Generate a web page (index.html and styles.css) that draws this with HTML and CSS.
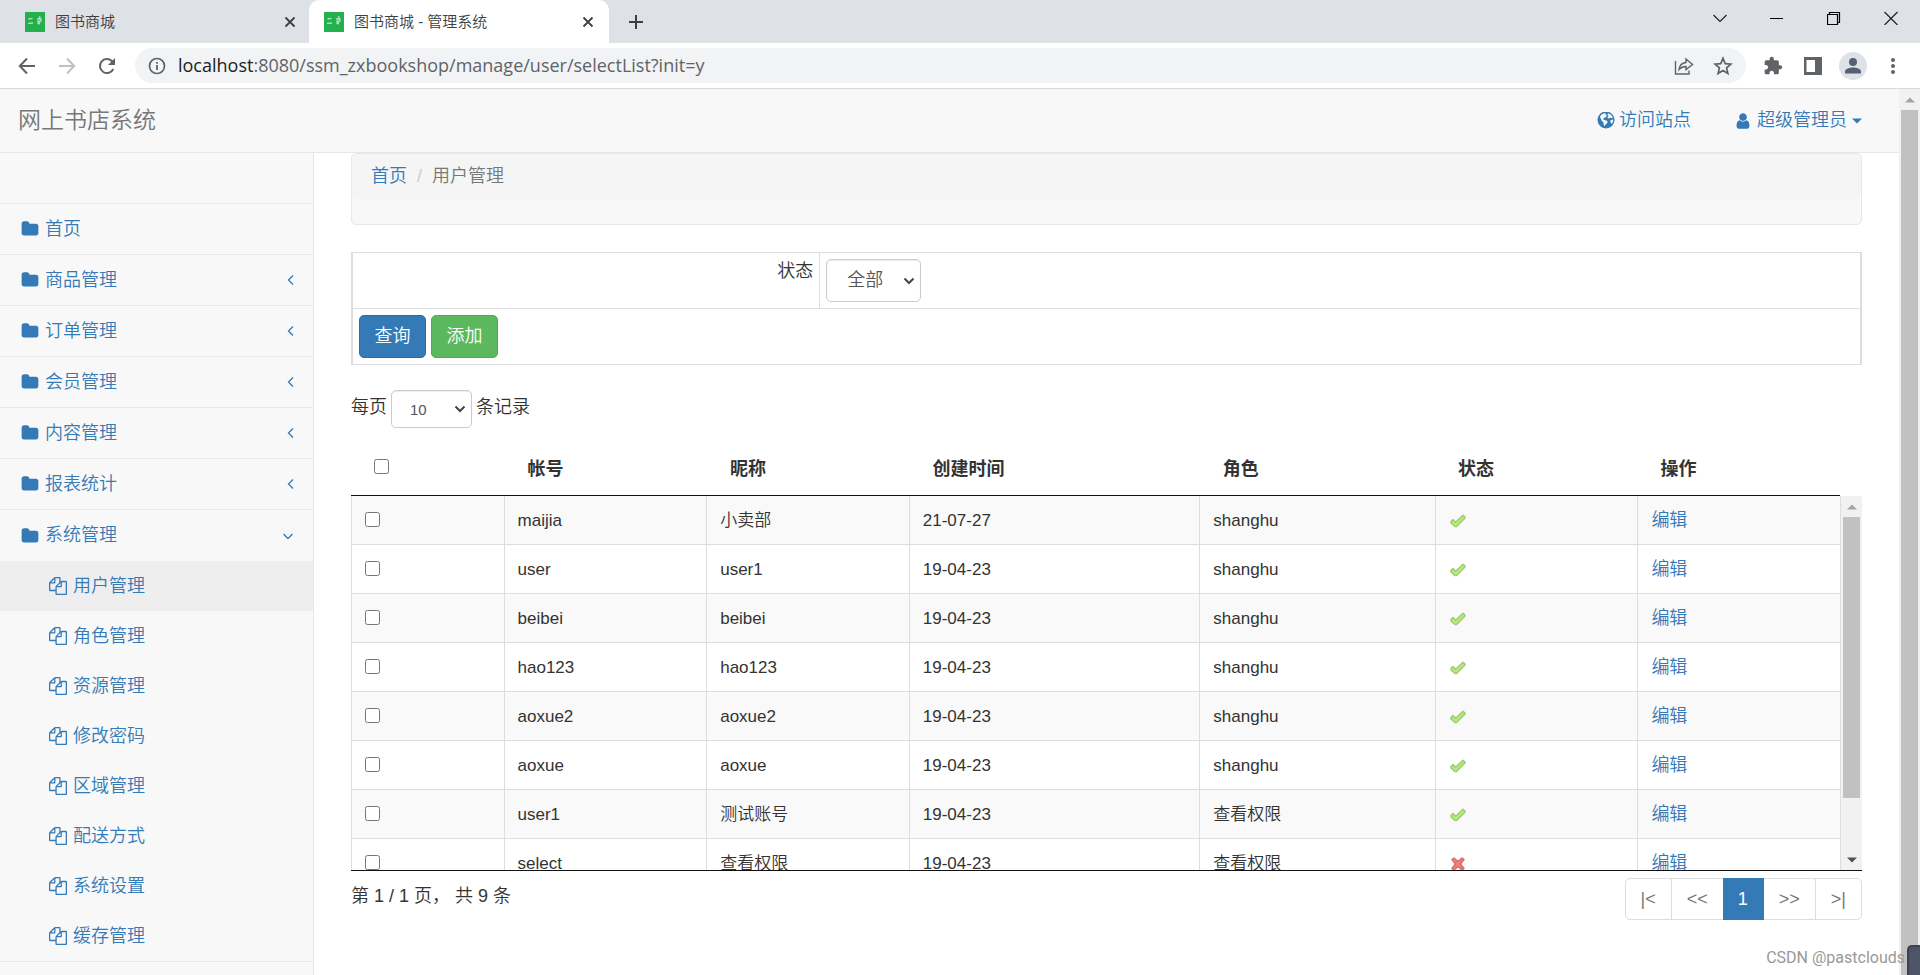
FILE: index.html
```html
<!DOCTYPE html>
<html lang="zh-CN">
<head>
<meta charset="utf-8">
<title>图书商城 - 管理系统</title>
<link rel="stylesheet" href="styles.css">
</head>
<body>
<svg class="sprite" aria-hidden="true">
  <symbol id="folder" viewBox="0 0 1792 1792"><path d="M1728 608v704q0 92-66 158t-158 66h-1216q-92 0-158-66t-66-158v-960q0-92 66-158t158-66h320q92 0 158 66t66 158v32h672q92 0 158 66t66 158z"/></symbol>
  <symbol id="files" viewBox="0 0 1792 1792"><path d="M1696 384q40 0 68 28t28 68v1216q0 40-28 68t-68 28h-960q-40 0-68-28t-28-68v-288h-544q-40 0-68-28t-28-68v-672q0-40 20-88t48-76l408-408q28-28 76-48t88-20h416q40 0 68 28t28 68v328q68-40 128-40h416zm-544 213l-299 299h299v-299zm-640-384l-299 299h299v-299zm196 647l316-316v-416h-384v416q0 40-28 68t-68 28h-416v640h512v-256q0-40 20-88t48-76zm956 804v-1152h-384v416q0 40-28 68t-68 28h-416v640h896z"/></symbol>
  <symbol id="user" viewBox="0 0 1792 1792"><path d="M1536 1399q0 109-62.500 187t-150.500 78h-854q-88 0-150.500-78t-62.500-187q0-85 8.500-160.500t31.500-152 58.500-131 94-89 134.500-34.500q131 128 313 128t313-128q76 0 134.500 34.500t94 89 58.500 131 31.500 152 8.500 160.500zm-256-887q0 159-112.500 271.500t-271.500 112.500-271.500-112.500-112.500-271.500 112.500-271.500 271.500-112.500 271.500 112.500 112.500 271.500z"/></symbol>
  <symbol id="globe" viewBox="0 0 18 18"><circle cx="9" cy="8" r="8.500"/><path fill="#f8f8f8" d="M4.500 2.500 7 1.200l2 .4-.5 1.400 1.500.6-1 1.500-2 .8L6 7.300l1.500.8 1.800.5 1.500 1.200-.8 1.500-1.500 1.200-.8 1.700L6.600 12.500l-.2-2.200L4.500 8.500 3.800 6.600 2.800 5zM11 1.300l2.800 1.200 2.100 3-1.100.8-1.700-.5-1.300.8-1.500-1.200 1.300-1.400-1.200-1zM13.300 8.200l2.700-.6.200 1.700-1.300 2.600-1.300-1.500z"/></symbol>
  <symbol id="check" viewBox="0 0 18 16"><path d="M2 8.600 4 6.600 6.600 9.200 14 2.200 16 4 16 5 7.500 13.500 6 13.500 2 10z" fill="#b4f070" stroke="#a3c97c" stroke-width="1.500" stroke-linejoin="round"/></symbol>
  <symbol id="cross" viewBox="0 0 18 16"><path d="M3 3.500 5 2 9 5.500 13 2 15 3.500 11.500 8 15 12.500 13 14 9 10.500 5 14 3 12.500 6.500 8z" fill="#f08080" stroke="#d96c6c" stroke-width="1.500" stroke-linejoin="round"/></symbol>
  <symbol id="left" viewBox="0 0 14 14"><path d="M12 2.500 7.500 7l4.500 4.500" fill="none" stroke="currentColor" stroke-width="1.300"/></symbol>
  <symbol id="down" viewBox="0 0 14 14"><path d="M2.500 5 7 9.500 11.500 5" fill="none" stroke="currentColor" stroke-width="1.300"/></symbol>
  <symbol id="pick" viewBox="0 0 12 12"><path d="M1.500 3.500 6 8l4.500-4.500" fill="none" stroke="currentColor" stroke-width="2"/></symbol>
  <symbol id="x" viewBox="0 0 12 12"><path d="m1.500 1.500 9 9m0-9-9 9" fill="none" stroke="#3c4043" stroke-width="1.800"/></symbol>
  <symbol id="fav" viewBox="0 0 20 20"><path fill="#22b14c" d="M0 0h20v20H0z"/><path d="M3.500 7l4-.700M3 11.500l5-.500M12 7l4.500-.500M12 9.500l4.500-.500M15 4l-1 3 2 1-3.500 4M14.500 9v3.500" fill="none" stroke="#b5dcc0" stroke-width="1.300"/></symbol>
  <symbol id="tri-up" viewBox="0 0 10 6"><path d="M0 5.500 5 .5l5 5z"/></symbol>
  <symbol id="tri-down" viewBox="0 0 10 6"><path d="M0 .5 5 5.500l5-5z"/></symbol>
</svg>

<header class="browser">
  <div class="tabs">
    <div class="tab"><svg class="fav"><use href="#fav"/></svg><span class="tab-title">图书商城</span><button class="plain" aria-label="关闭标签"><svg class="i12"><use href="#x"/></svg></button></div>
    <div class="tab active"><svg class="fav"><use href="#fav"/></svg><span class="tab-title">图书商城 - 管理系统</span><button class="plain" aria-label="关闭标签"><svg class="i12"><use href="#x"/></svg></button></div>
    <button class="plain new-tab" aria-label="新标签"><svg class="i16" viewBox="0 0 16 16"><path d="M8 1v14M1 8h14" stroke="#3c4043" stroke-width="2"/></svg></button>
    <div class="window-buttons">
      <button class="plain" aria-label="搜索标签"><svg class="i14" viewBox="0 0 14 14"><path d="m.5 4 6.500 6.500L13.500 4" fill="none" stroke="#222" stroke-width="1.200"/></svg></button>
      <button class="plain" aria-label="最小化"><svg class="i14" viewBox="0 0 14 14"><path d="M0 7.500h13" stroke="#000"/></svg></button>
      <button class="plain" aria-label="还原"><svg class="i14" viewBox="0 0 14 14"><path d="M.5 3.500h10v10H.5zM2.500 3.500v-2h10v10h-2" fill="none" stroke="#000" stroke-width="1.200"/></svg></button>
      <button class="plain" aria-label="关闭"><svg class="i14" viewBox="0 0 14 14"><path d="m.5 1 13 13m0-13-13 13" fill="none" stroke="#222" stroke-width="1.200"/></svg></button>
    </div>
  </div>
  <div class="toolbar">
    <button class="plain nav" aria-label="后退"><svg class="i18" viewBox="0 0 18 18"><path d="M17 9H2M9 1.500 1.800 9 9 16.500" fill="none" stroke="#5f6368" stroke-width="2"/></svg></button>
    <button class="plain nav" aria-label="前进"><svg class="i18" viewBox="0 0 18 18"><path d="M1 9h15M9 1.500 16.200 9 9 16.500" fill="none" stroke="#bdc1c6" stroke-width="2"/></svg></button>
    <button class="plain nav" aria-label="刷新"><svg class="i18" viewBox="0 0 18 18"><path d="M15.300 12A7 7 0 1 1 14 4.200l1.500 1.500" fill="none" stroke="#5f6368" stroke-width="2"/><path d="M17 1v7h-7z" fill="#5f6368"/></svg></button>
    <div class="address">
      <svg class="i18" viewBox="0 0 18 18"><circle cx="9" cy="9" r="7.500" fill="none" stroke="#5f6368" stroke-width="1.700"/><path d="M9 8v5M9 5v1.800" stroke="#5f6368" stroke-width="1.800"/></svg>
      <span class="url"><b>localhost</b>:8080/ssm_zxbookshop/manage/user/selectList?init=y</span>
      <button class="plain" aria-label="分享"><svg class="i20" viewBox="0 0 20 20"><path d="M1.500 5v13h13.500v-3.500M5 13.500c.5-4.500 3-6.500 7-7V3l6.500 5.500-6.500 5v-3c-3 0-5 .8-7 3z" fill="none" stroke="#5f6368" stroke-width="1.400"/></svg></button>
      <button class="plain" aria-label="收藏"><svg class="i20" viewBox="0 0 20 20"><path d="m10 2.300 2.200 5.300 5.700.5-4.300 3.800 1.300 5.600L10 14.500l-4.900 3 1.300-5.600-4.300-3.800 5.700-.5z" fill="none" stroke="#5f6368" stroke-width="1.700"/></svg></button>
    </div>
    <div class="extensions">
      <button class="plain" aria-label="扩展程序"><svg class="i20" viewBox="0 0 24 24"><path d="M20.500 11H19V7c0-1.100-.9-2-2-2h-4V3.500C13 2.120 11.880 1 10.500 1S8 2.120 8 3.500V5H4c-1.100 0-1.990.9-1.990 2v3.800H3.500c1.490 0 2.700 1.210 2.700 2.700s-1.210 2.700-2.700 2.700H2V20c0 1.100.9 2 2 2h3.800v-1.500c0-1.490 1.210-2.700 2.700-2.700 1.490 0 2.700 1.210 2.700 2.700V22H17c1.100 0 2-.9 2-2v-4h1.500c1.380 0 2.500-1.120 2.500-2.500S21.880 11 20.500 11z"/></svg></button>
      <button class="plain" aria-label="侧边栏"><svg class="i18" viewBox="0 0 18 18"><path d="M0 0h18v18H0zM2.500 3v12H11V3z" fill-rule="evenodd"/></svg></button>
      <button class="plain" aria-label="个人资料"><svg class="i28" viewBox="0 0 28 28"><circle cx="14" cy="14" r="14" fill="#dee1e6"/><g fill="#566074"><circle cx="14" cy="10" r="4"/><path d="M6 21.500v-2c0-2.700 5-4 8-4s8 1.300 8 4v2z"/></g></svg></button>
      <button class="plain" aria-label="菜单"><svg class="i18" viewBox="0 0 18 18"><circle cx="9" cy="3" r="2"/><circle cx="9" cy="9" r="2"/><circle cx="9" cy="15" r="2"/></svg></button>
    </div>
  </div>
</header>

<div class="viewport">
  <div class="page">
    <header class="topbar">
      <a class="brand" href="#">网上书店系统</a>
      <nav class="top-links">
        <a href="#"><svg class="i18"><use href="#globe"/></svg><span>访问站点</span></a>
        <a href="#" class="account"><svg class="i18"><use href="#user"/></svg><span>超级管理员</span><svg class="caret"><use href="#tri-down"/></svg></a>
      </nav>
    </header>
    <div class="body">
      <nav class="sidebar">
        <ul class="menu">
          <li class="search"></li>
          <li><a href="#"><svg class="i18"><use href="#folder"/></svg><span>首页</span></a></li>
          <li><a href="#"><svg class="i18"><use href="#folder"/></svg><span>商品管理</span><svg class="arrow"><use href="#left"/></svg></a></li>
          <li><a href="#"><svg class="i18"><use href="#folder"/></svg><span>订单管理</span><svg class="arrow"><use href="#left"/></svg></a></li>
          <li><a href="#"><svg class="i18"><use href="#folder"/></svg><span>会员管理</span><svg class="arrow"><use href="#left"/></svg></a></li>
          <li><a href="#"><svg class="i18"><use href="#folder"/></svg><span>内容管理</span><svg class="arrow"><use href="#left"/></svg></a></li>
          <li><a href="#"><svg class="i18"><use href="#folder"/></svg><span>报表统计</span><svg class="arrow"><use href="#left"/></svg></a></li>
          <li><a class="section" href="#"><svg class="i18"><use href="#folder"/></svg><span>系统管理</span><svg class="arrow"><use href="#down"/></svg></a>
            <ul class="submenu">
              <li><a class="current" href="#"><svg class="i18"><use href="#files"/></svg><span>用户管理</span></a></li>
              <li><a href="#"><svg class="i18"><use href="#files"/></svg><span>角色管理</span></a></li>
              <li><a href="#"><svg class="i18"><use href="#files"/></svg><span>资源管理</span></a></li>
              <li><a href="#"><svg class="i18"><use href="#files"/></svg><span>修改密码</span></a></li>
              <li><a href="#"><svg class="i18"><use href="#files"/></svg><span>区域管理</span></a></li>
              <li><a href="#"><svg class="i18"><use href="#files"/></svg><span>配送方式</span></a></li>
              <li><a href="#"><svg class="i18"><use href="#files"/></svg><span>系统设置</span></a></li>
              <li><a href="#"><svg class="i18"><use href="#files"/></svg><span>缓存管理</span></a></li>
            </ul>
          </li>
        </ul>
      </nav>
      <main class="content">
        <div class="crumb-box">
          <ol class="crumbs"><li><a href="#">首页</a></li><li class="slash">/</li><li>用户管理</li></ol>
        </div>
        <table class="filter">
          <tr><td class="filter-label"><label for="status">状态</label></td><td><div class="select status"><select id="status"><option>全部</option></select><svg class="i12"><use href="#pick"/></svg></div></td></tr>
          <tr><td colspan="2"><div class="actions"><button class="btn primary">查询</button><button class="btn success">添加</button></div></td></tr>
        </table>
        <div class="length"><label for="size">每页</label><div class="select size"><select id="size"><option>10</option></select><svg class="i12"><use href="#pick"/></svg></div><span>条记录</span></div>
        <table class="grid head">
          <colgroup><col class="c1"><col class="c2"><col class="c3"><col class="c4"><col class="c5"><col class="c6"><col class="c7"></colgroup>
          <thead><tr><th><input type="checkbox" aria-label="全选"></th><th>帐号</th><th>昵称</th><th>创建时间</th><th>角色</th><th>状态</th><th>操作</th></tr></thead>
        </table>
        <div class="scroller">
          <div class="rows">
            <table class="grid data">
              <colgroup><col class="c1"><col class="c2"><col class="c3"><col class="c4"><col class="c5"><col class="c6"><col class="c7"></colgroup>
              <tbody>
                <tr><td><input type="checkbox" aria-label="maijia"></td><td>maijia</td><td>小卖部</td><td>21-07-27</td><td>shanghu</td><td><svg class="mark"><use href="#check"/></svg></td><td><a href="#">编辑</a></td></tr>
                <tr><td><input type="checkbox" aria-label="user"></td><td>user</td><td>user1</td><td>19-04-23</td><td>shanghu</td><td><svg class="mark"><use href="#check"/></svg></td><td><a href="#">编辑</a></td></tr>
                <tr><td><input type="checkbox" aria-label="beibei"></td><td>beibei</td><td>beibei</td><td>19-04-23</td><td>shanghu</td><td><svg class="mark"><use href="#check"/></svg></td><td><a href="#">编辑</a></td></tr>
                <tr><td><input type="checkbox" aria-label="hao123"></td><td>hao123</td><td>hao123</td><td>19-04-23</td><td>shanghu</td><td><svg class="mark"><use href="#check"/></svg></td><td><a href="#">编辑</a></td></tr>
                <tr><td><input type="checkbox" aria-label="aoxue2"></td><td>aoxue2</td><td>aoxue2</td><td>19-04-23</td><td>shanghu</td><td><svg class="mark"><use href="#check"/></svg></td><td><a href="#">编辑</a></td></tr>
                <tr><td><input type="checkbox" aria-label="aoxue"></td><td>aoxue</td><td>aoxue</td><td>19-04-23</td><td>shanghu</td><td><svg class="mark"><use href="#check"/></svg></td><td><a href="#">编辑</a></td></tr>
                <tr><td><input type="checkbox" aria-label="user1"></td><td>user1</td><td>测试账号</td><td>19-04-23</td><td>查看权限</td><td><svg class="mark"><use href="#check"/></svg></td><td><a href="#">编辑</a></td></tr>
                <tr><td><input type="checkbox" aria-label="select"></td><td>select</td><td>查看权限</td><td>19-04-23</td><td>查看权限</td><td><svg class="mark"><use href="#cross"/></svg></td><td><a href="#">编辑</a></td></tr>
              </tbody>
            </table>
          </div>
          <div class="scrollbar"><svg class="tri muted"><use href="#tri-up"/></svg><div class="thumb table-thumb"></div><svg class="tri"><use href="#tri-down"/></svg></div>
        </div>
        <div class="footer">
          <div class="info">第 1 / 1 页， 共 9 条</div>
          <nav class="pager"><a href="#">|&lt;</a><a href="#">&lt;&lt;</a><a class="on" href="#">1</a><a href="#">&gt;&gt;</a><a href="#">&gt;|</a></nav>
        </div>
      </main>
    </div>
  </div>
  <div class="scrollbar"><svg class="tri muted"><use href="#tri-up"/></svg><div class="thumb"></div></div>
  <div class="widget"></div>
  <div class="watermark">CSDN @pastclouds</div>
</div>
</body>
</html>
```

FILE: styles.css
```css
* { box-sizing: border-box; }
body {
  margin: 0;
  height: 100vh;
  display: flex;
  flex-direction: column;
  overflow: hidden;
  font: 350 17px/25px "Liberation Sans", "Noto Sans CJK SC", sans-serif;
  color: #333;
  background: #fff;
}
ul, ol { list-style: none; margin: 0; padding: 0; }
a { color: #337ab7; text-decoration: none; }
svg { display: block; flex: none; fill: currentColor; }
.sprite { position: absolute; width: 0; height: 0; }
.plain { border: 0; padding: 0; background: none; display: flex; color: #5f6368; }
.i12 { width: 12px; height: 12px; }
.i14 { width: 14px; height: 14px; }
.i16 { width: 16px; height: 16px; }
.i18 { width: 18px; height: 18px; }
.i20 { width: 20px; height: 20px; }
.i28 { width: 28px; height: 28px; }

/* browser frame */
.browser { flex: none; border-bottom: 1px solid #d9dadc; }
.tabs { display: flex; align-items: stretch; height: 43px; background: #dee1e6; }
.tab {
  display: flex;
  align-items: center;
  width: 300px;
  padding: 0 15px;
  gap: 10px;
  font-size: 15px;
  color: #3c4043;
}
.tab:first-child { width: 309px; padding: 0 13px 0 25px; }
.tab.active { background: #fff; border-radius: 10px 10px 0 0; }
.fav { width: 20px; height: 20px; }
.tab-title { flex: 1; }
.new-tab { align-items: center; margin-left: 19px; }
.window-buttons { display: flex; gap: 43px; margin: 11px 22px 0 auto; }
.toolbar { display: flex; align-items: center; height: 45px; padding: 0 18px; background: #fff; }
.nav { margin-right: 22px; }
.nav:nth-child(3) { margin-right: 19px; }
.address {
  flex: 1;
  display: flex;
  align-items: center;
  height: 35px;
  padding: 0 13px;
  gap: 19px;
  border-radius: 18px;
  background: #f1f3f4;
}
.url { flex: 1; margin-left: -7px; font: 400 18px/25px "Open Sans", sans-serif; color: #5f6368; }
.url b { font-weight: 400; color: #202124; }
.extensions { display: flex; align-items: center; gap: 17px; margin-left: 17px; }
.extensions .plain:first-child { margin-right: 4px; }

/* page shell */
.viewport { position: relative; flex: 1; min-height: 0; display: flex; }
.page { flex: 1; display: flex; flex-direction: column; min-width: 0; }
.topbar {
  display: flex;
  align-items: center;
  justify-content: space-between;
  height: 64px;
  padding: 0 37px 0 18px;
  background: #f8f8f8;
  border-bottom: 1px solid #e7e7e7;
}
.brand { font-size: 23px; color: #777; }
.top-links { display: flex; gap: 43px; }
.top-links a { display: flex; align-items: center; gap: 4px; font-size: 18px; }
.top-links .account { gap: 5px; }
.caret { width: 10px; height: 6px; }
.body { flex: 1; display: flex; min-height: 0; }
.sidebar { width: 314px; flex: none; background: #f8f8f8; border-right: 1px solid #e7e7e7; }
.menu > li { border-bottom: 1px solid #e7e7e7; }
.menu a { display: flex; align-items: center; height: 50px; padding: 0 18px 0 21px; gap: 6px; font-size: 18px; }
.menu .section { height: 51px; }
.search { height: 51px; }
.arrow { width: 14px; height: 14px; margin-left: auto; }
.submenu a { padding-left: 49px; }
.submenu .current { background: #eee; }

/* content */
.content { flex: 1; min-width: 0; padding: 0 37px; }
.crumb-box { height: 72px; border: 1px solid #e7e7e7; border-radius: 5px; background: #f8f8f8; }
.crumbs { display: flex; gap: 10px; padding: 10px 19px; font-size: 18px; color: #777; background: #f5f5f5; border-radius: 5px; }
.slash { color: #ccc; }
.filter { width: 100%; margin-top: 27px; border-collapse: collapse; border: solid #ddd; border-width: 1px 2px; table-layout: fixed; }
.filter td { height: 56px; padding: 6px; border: 1px solid #ddd; vertical-align: top; }
.filter .filter-label { width: 31%; text-align: right; font-size: 18px; }
.select { position: relative; }
.select select {
  appearance: none;
  display: block;
  width: 100%;
  height: 100%;
  padding: 0 20px;
  border: 1px solid #ccc;
  border-radius: 5px;
  background: #fff;
  color: #555;
  font: inherit;
  box-shadow: inset 0 1px 1px rgba(0, 0, 0, .08);
}
.select svg { position: absolute; right: 6px; top: 50%; margin-top: -6px; color: #444; pointer-events: none; }
.status { width: 95px; height: 43px; font-size: 18px; }
.size { width: 81px; height: 38px; font-size: 15px; }
.size select { padding: 1px 18px 0; }
.actions { display: flex; gap: 5px; }
.btn { width: 67px; height: 43px; padding: 0; border: 1px solid; border-radius: 5px; color: #fff; font: inherit; font-size: 18px; }
.primary { background: #337ab7; border-color: #2e6da4; }
.success { background: #5cb85c; border-color: #4cae4c; }
.length { display: flex; gap: 4px; margin-top: 25px; font-size: 18px; line-height: 34px; }

.grid { width: 100%; table-layout: fixed; border-collapse: separate; border-spacing: 0; }
.c1 { width: 153px; }
.c2, .c3, .c7 { width: 13.6%; }
.c4 { width: 19.5%; }
.c5 { width: 15.8%; }
.c6 { width: 13.6%; }
.grid th { text-align: left; }
.grid input { display: block; width: 15px; height: 15px; margin: 0; }
.head { width: calc(100% - 22px); margin-top: 11px; }
.head th { height: 57px; padding: 4px 23px 0; font-size: 18px; border-bottom: 1px solid #111; }
.head th:first-child { padding: 0 23px 1px; }
.scroller { display: flex; height: 375px; border-bottom: 1px solid #111; }
.rows { flex: 1; overflow: hidden; }
.data td { height: 49px; padding: 0 13px; border: solid #ddd; border-width: 0 1px 1px 0; }
.data td:first-child { border-left-width: 1px; padding-bottom: 2px; }
.data a { font-size: 18px; }
.data tr:nth-child(odd) { background: #f9f9f9; }
.mark { width: 18px; height: 16px; margin-top: 2px; }
.scrollbar { width: 21px; flex: none; display: flex; flex-direction: column; align-items: center; background: #f1f1f1; }
.tri { width: 10px; height: 6px; margin: 8px 0 7px; color: #505050; }
.tri.muted { color: #a3a3a3; }
.thumb { width: 17px; flex: 1; background: #c1c1c1; }
.table-thumb { margin-bottom: 51px; }

.footer { display: flex; justify-content: space-between; padding-top: 7px; }
.info { font-size: 18px; line-height: 36px; }
.pager { display: flex; border: 1px solid #ddd; border-radius: 5px; font-size: 18px; line-height: 40px; }
.pager a { padding: 0 15px; color: #777; border-right: 1px solid #ddd; }
.pager a:last-child { border: 0; }
.pager .on { margin: -1px 0 -1px -1px; line-height: 42px; background: #337ab7; color: #fff; border-color: #337ab7; }

.watermark { position: absolute; right: 15px; bottom: 5px; font: 400 16px/24px Roboto, sans-serif; color: #999; }
.widget { position: absolute; right: 0; bottom: 0; width: 13px; height: 30px; border: solid #3b4052; border-width: 2px 0 0 2px; border-radius: 5px 0 0 0; background: #4e5468; }
```
